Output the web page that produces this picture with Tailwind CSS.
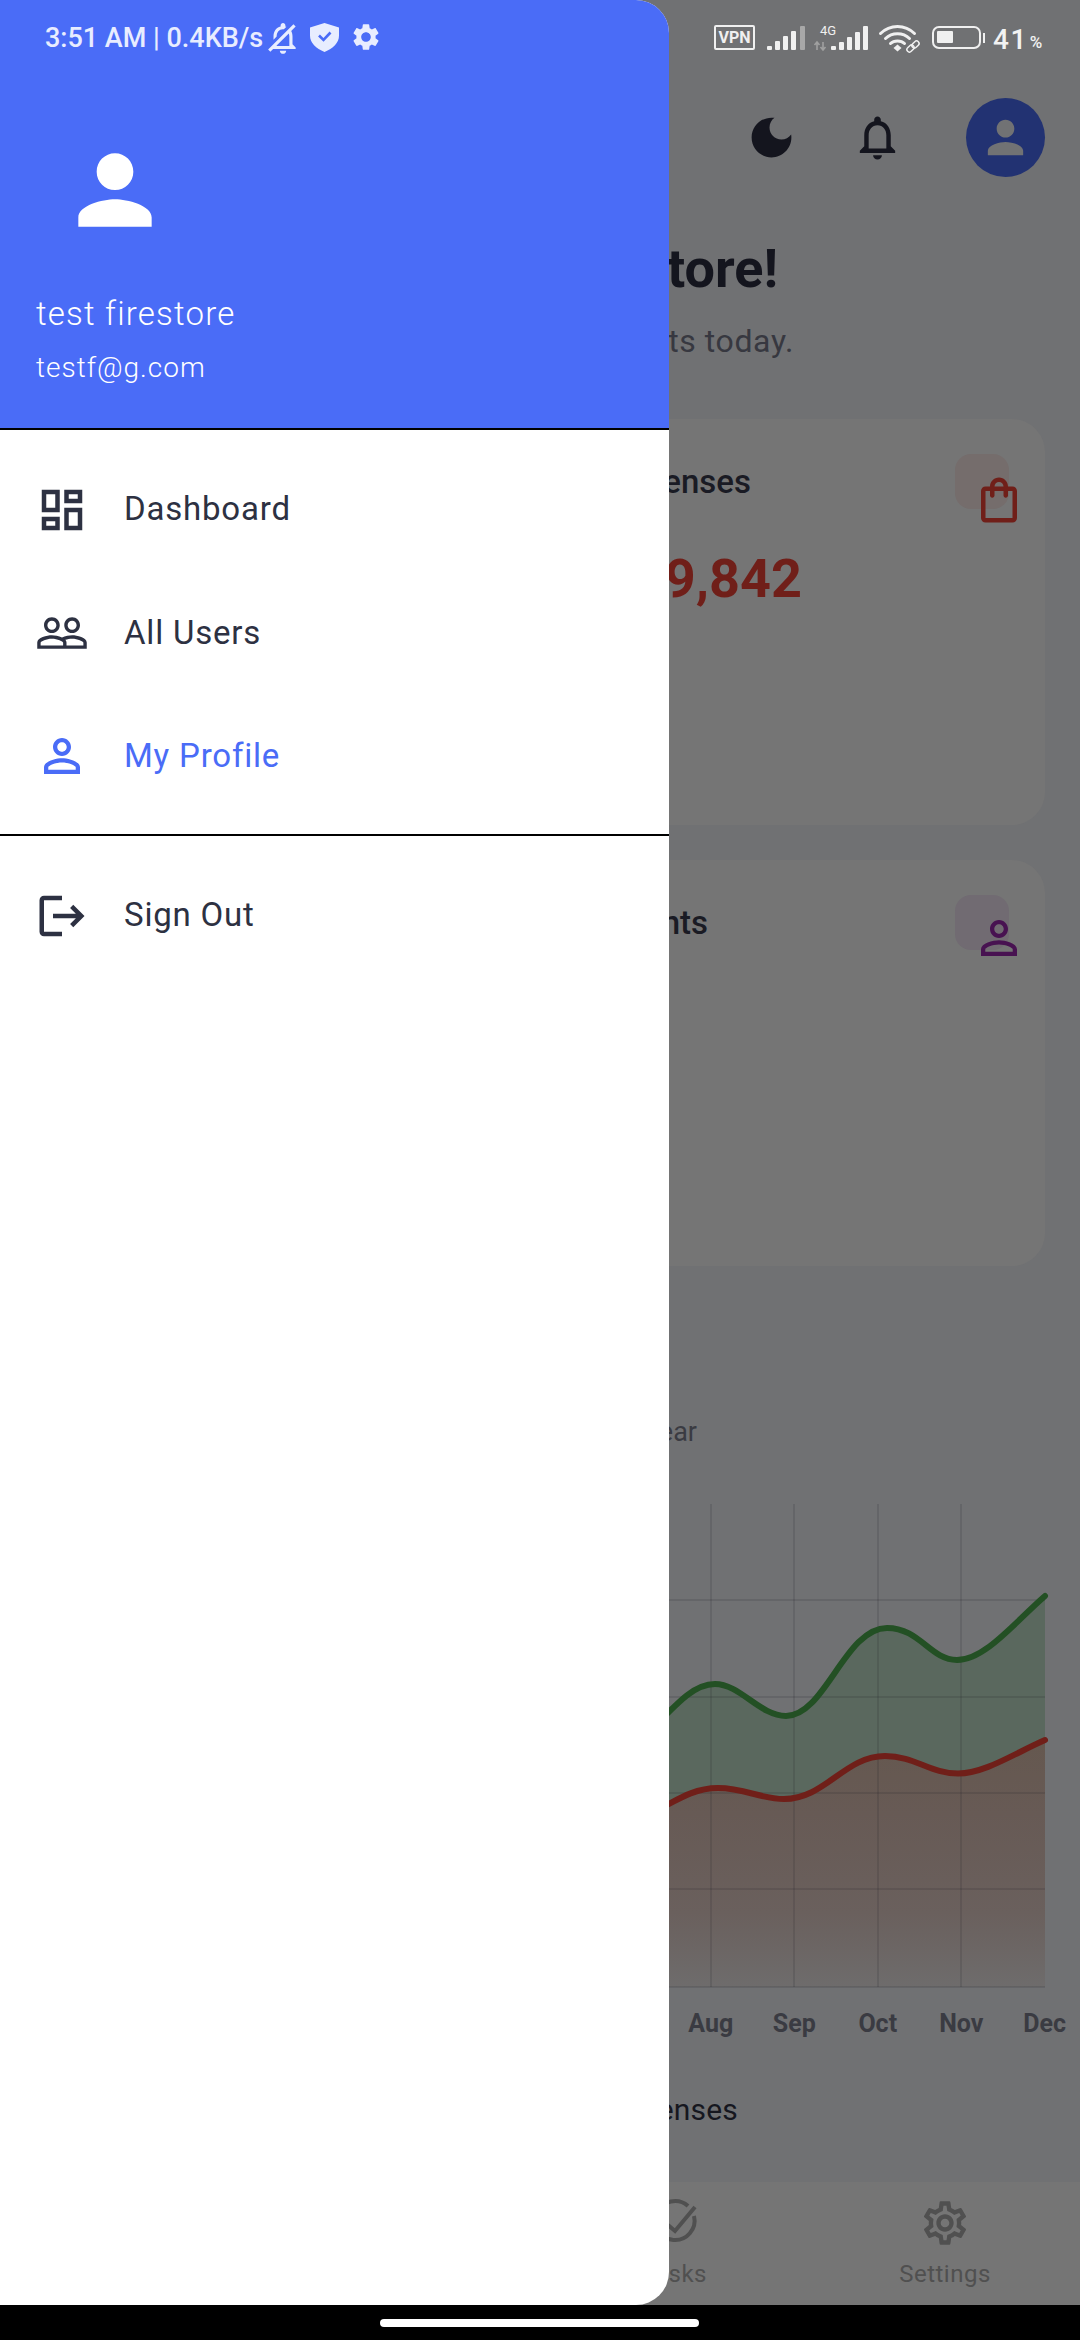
<!DOCTYPE html>
<html>
<head>
<meta charset="utf-8">
<script src="https://cdn.jsdelivr.net/npm/@tailwindcss/browser@4"></script>
</head>
<body class="m-0">
<div class="relative w-[1080px] h-[2340px] bg-black overflow-hidden font-['Roboto',sans-serif]">

  <!-- dimmed app behind the drawer -->
  <main class="h-[2305px] bg-[#707173] flex flex-col pl-[669px] overflow-hidden">
    <!-- status bar, right side -->
    <div class="h-[98px] pt-[25px] pl-[45px] flex items-start text-[#f0f0f0]">
      <div class="w-[41px] h-[25px] border-2 border-[#f0f0f0] rounded-[2px] flex items-center justify-center text-[16px] leading-none font-bold">VPN</div>
      <svg class="ml-[12px] -mt-[5px] w-[156px] h-[33px]" viewBox="767 20 156 33">
        <g fill="#f0f0f0">
          <rect x="767" y="46" width="5" height="4" rx="1"/><rect x="775" y="41" width="5" height="9" rx="1"/><rect x="783" y="36" width="5" height="14" rx="1"/><rect x="791" y="31" width="5" height="19" rx="1"/>
          <rect x="831" y="46" width="5" height="4" rx="1"/><rect x="839" y="42" width="5" height="8" rx="1"/><rect x="847" y="37" width="5" height="13" rx="1"/><rect x="855" y="32" width="5" height="18" rx="1"/><rect x="863" y="26" width="5" height="24" rx="1"/>
        </g>
        <rect x="800" y="26" width="5" height="24" rx="1" fill="#a8a8a8"/>
        <text x="820" y="35" font-size="13" fill="#f0f0f0">4G</text>
        <path d="M817 50v-8m-2.500 3l2.500-3 2.500 3M823 42v8m-2.500-3l2.500 3 2.500-3" stroke="#a0a0a0" stroke-width="1.600" fill="none"/>
        <g fill="none" stroke="#f0f0f0" stroke-linecap="round">
          <path d="M880.500 33.500c9.500-9.500 24.500-9.500 34 0" stroke-width="3"/>
          <path d="M885.500 38.500c6.500-6.500 17.500-6.500 24 0" stroke-width="3"/>
          <path d="M890.500 43.500c3.500-3.500 10.500-3.500 14 0" stroke-width="3"/>
        </g>
        <path d="M893.500 48l4-3.500 4 3.500-4 3.500z" fill="#f0f0f0"/>
        <g fill="none" stroke="#f0f0f0" stroke-width="1.500">
          <rect x="906.500" y="46" width="8" height="5" rx="2.500" transform="rotate(-45 910.500 48.500)"/>
          <rect x="911.500" y="42" width="8" height="5" rx="2.500" transform="rotate(-45 915.500 44.500)"/>
        </g>
      </svg>
      <div class="ml-[9px] mt-[1px] w-[49px] h-[23px] border-[2.5px] border-[#f0f0f0] rounded-[7px] p-[3px]">
        <div class="w-[16px] h-[12px] bg-[#f0f0f0] rounded-[1px]"></div>
      </div>
      <div class="ml-[2px] mt-[8px] w-[2px] h-[10px] bg-[#f0f0f0]"></div>
      <div class="ml-[8px] -mt-[1px] text-[28px] leading-[32px] font-medium text-[#f2f2f2] tracking-[1.500px]">41</div>
      <div class="ml-[2px] mt-[8px] text-[17px] leading-[18px] font-medium text-[#f2f2f2]">%</div>
    </div>

    <!-- app bar -->
    <div class="h-[79px] pl-[76px] flex items-center">
      <svg class="w-[53px] h-[53px] shrink-0" viewBox="0 0 24 24" fill="#14151e"><path d="M12 3c-4.970 0-9 4.030-9 9s4.030 9 9 9 9-4.030 9-9c0-.46-.04-.92-.1-1.360-.98 1.370-2.580 2.260-4.400 2.260-2.980 0-5.400-2.420-5.400-5.400 0-1.810.89-3.420 2.260-4.400-.44-.06-.9-.1-1.360-.1z"/></svg>
      <svg class="ml-[53px] w-[53px] h-[53px] shrink-0" viewBox="0 0 24 24" fill="#14151e"><path d="M12 22c1.100 0 2-.9 2-2h-4c0 1.100.9 2 2 2zm6-6v-5c0-3.070-1.630-5.640-4.500-6.320V4c0-.83-.67-1.500-1.500-1.500s-1.500.67-1.500 1.500v.68C7.640 5.360 6 7.920 6 11v5l-2 2v1h16v-1l-2-2zm-2 1H8v-6c0-2.480 1.510-4.500 4-4.500s4 2.020 4 4.500v6z"/></svg>
      <div class="ml-[62px] w-[79px] h-[79px] rounded-full bg-[#223272] flex items-center justify-center shrink-0">
        <svg class="w-[53px] h-[53px]" viewBox="0 0 24 24" fill="#717274"><path d="M12 12c2.210 0 4-1.790 4-4s-1.790-4-4-4-4 1.790-4 4 1.790 4 4 4zm0 2c-2.670 0-8 1.340-8 4v2h16v-2c0-2.660-5.330-4-8-4z"/></svg>
      </div>
    </div>

    <!-- greeting -->
    <div class="mt-[60px] w-[109px] h-[64px] flex justify-end whitespace-nowrap text-[54px] leading-[64px] font-bold text-[#14151e]">tore!</div>
    <div class="mt-[20px] w-[125px] h-[40px] flex justify-end whitespace-nowrap text-[32px] leading-[40px] tracking-[0.6px] text-[#373840]">ts today.</div>

    <!-- expenses card -->
    <section class="relative mt-[58px] w-[376px] h-[406px] bg-[#757575] rounded-r-[33px] pt-[43px] shrink-0">
      <div class="w-[82px] h-[40px] flex justify-end whitespace-nowrap text-[33px] leading-[40px] font-medium text-[#1a1b24]">enses</div>
      <div class="mt-[45px] w-[133px] h-[64px] flex justify-end whitespace-nowrap text-[54px] leading-[64px] font-bold text-[#701f19]">9,842</div>
      <div class="absolute left-[286px] top-[35px] w-[54px] h-[55px] rounded-[16px] bg-[#756d6c]"></div>
      <svg class="absolute left-[303px] top-[54px] w-[54px] h-[54px]" viewBox="0 0 24 24" fill="#701f19"><path d="M18 6h-2c0-2.210-1.790-4-4-4S8 3.790 8 6H6c-1.100 0-2 .9-2 2v12c0 1.100.9 2 2 2h12c1.100 0 2-.9 2-2V8c0-1.100-.9-2-2-2zm-6-2c1.100 0 2 .9 2 2h-4c0-1.100.9-2 2-2zm6 16H6V8h2v2c0 .55.45 1 1 1s1-.45 1-1V8h4v2c0 .55.45 1 1 1s1-.45 1-1V8h2v12z"/></svg>
    </section>

    <!-- clients card -->
    <section class="relative mt-[35px] w-[376px] h-[406px] bg-[#757575] rounded-r-[33px] pt-[43px] shrink-0">
      <div class="w-[39px] h-[40px] flex justify-end whitespace-nowrap text-[33px] leading-[40px] font-medium text-[#1a1b24]">nts</div>
      <div class="absolute left-[286px] top-[35px] w-[54px] h-[55px] rounded-[16px] bg-[#716b72]"></div>
      <svg class="absolute left-[303px] top-[51px] w-[54px] h-[54px]" viewBox="0 0 24 24" fill="#481251"><path d="M12 5.900c1.160 0 2.100.94 2.100 2.100s-.94 2.100-2.100 2.100S9.900 9.160 9.900 8s.94-2.100 2.100-2.100m0 9c2.970 0 6.100 1.460 6.100 2.100v1.100H5.900V17c0-.64 3.130-2.100 6.100-2.100M12 4C9.790 4 8 5.790 8 8s1.790 4 4 4 4-1.790 4-4-1.790-4-4-4zm0 9c-2.670 0-8 1.340-8 4v3h16v-3c0-2.660-5.330-4-8-4z"/></svg>
    </section>

    <div class="mt-[148px] w-[28px] h-[36px] flex justify-end whitespace-nowrap text-[27px] leading-[36px] text-[#3a3b42]">ear</div>

    <!-- chart -->
    <svg class="mt-[54px] w-[411px] h-[486px] shrink-0" viewBox="669 1504 411 486">
      <defs>
        <linearGradient id="r" x1="0" y1="1740" x2="0" y2="1987" gradientUnits="userSpaceOnUse"><stop offset="0" stop-color="#65584f"/><stop offset=".3" stop-color="#675a55"/><stop offset=".7" stop-color="#6a605d"/><stop offset="1" stop-color="#6e6c6c"/></linearGradient>
      </defs>
      <path d="M650 1731C680 1700 695 1684 715 1684C740 1684 760 1716 786 1716C825 1716 845 1628 887 1628C920 1628 930 1660 957 1660C985 1660 1015 1622 1045 1596V1830H650Z" fill="#235024" fill-opacity=".27"/>
      <path d="M650 1814C680 1798 695 1788 718 1788C745 1788 760 1799 784 1799C825 1799 845 1756 885 1756C915 1756 930 1773.500 958 1773.500C985 1773.500 1015 1753 1045 1740V1987H650Z" fill="url(#r)"/>
      <g stroke="#17171c" stroke-opacity=".13" stroke-width="2" fill="none">
        <path d="M711 1504V1987M794 1504V1987M878 1504V1987M961 1504V1987"/>
        <path d="M669 1600H1045M669 1697H1045M669 1793H1045M669 1889H1045M669 1987H1045"/>
      </g>
      <path d="M650 1731C680 1700 695 1684 715 1684C740 1684 760 1716 786 1716C825 1716 845 1628 887 1628C920 1628 930 1660 957 1660C985 1660 1015 1622 1045 1596" fill="none" stroke="#235024" stroke-width="6" stroke-linecap="round"/>
      <path d="M650 1814C680 1798 695 1788 718 1788C745 1788 760 1799 784 1799C825 1799 845 1756 885 1756C915 1756 930 1773.500 958 1773.500C985 1773.500 1015 1753 1045 1740" fill="none" stroke="#701f19" stroke-width="6" stroke-linecap="round"/>
    </svg>
    <div class="mt-[18px] h-[32px] flex text-[25px] leading-[32px] font-bold text-[#3a3b42] shrink-0">
      <div class="w-[83.500px] shrink-0 text-center">Aug</div>
      <div class="w-[83.500px] shrink-0 text-center">Sep</div>
      <div class="w-[83.500px] shrink-0 text-center">Oct</div>
      <div class="w-[83.500px] shrink-0 text-center">Nov</div>
      <div class="w-[83.500px] shrink-0 text-center">Dec</div>
    </div>
    <div class="mt-[50px] w-[69px] h-[40px] flex justify-end whitespace-nowrap text-[30px] leading-[40px] tracking-[0.2px] text-[#16171f] shrink-0">enses</div>

    <!-- bottom navigation -->
    <nav class="mt-auto -ml-[669px] pl-[669px] h-[123px] bg-[#757575] flex text-[24px] leading-[32px] tracking-[0.5px] text-[#505050] shrink-0">
      <div class="w-[38px] flex flex-col items-end pt-[15px]">
        <svg class="mr-[6px] w-[52px] h-[52px] shrink-0" viewBox="649 2197 52 52" fill="none" stroke="#505050" stroke-width="4">
          <path d="M688 2206A19.500 19.500 0 1 0 694 2216"/>
          <path d="M668 2225l7 6 20-24"/>
        </svg>
        <div class="mt-[9px]">sks</div>
      </div>
      <div class="ml-[188px] w-[100px] flex flex-col items-center pt-[15px]">
        <svg class="w-[52px] h-[52px] shrink-0" viewBox="0 0 24 24" fill="#505050"><path d="M19.430 12.980c.04-.32.07-.64.07-.98 0-.34-.03-.66-.07-.98l2.110-1.650c.19-.15.24-.42.12-.64l-2-3.460c-.09-.16-.26-.25-.44-.25-.06 0-.12.01-.17.03l-2.490 1c-.52-.4-1.080-.73-1.690-.98l-.38-2.650C14.460 2.180 14.250 2 14 2h-4c-.25 0-.46.18-.49.42l-.38 2.650c-.61.25-1.170.59-1.690.98l-2.490-1c-.06-.02-.12-.03-.18-.03-.17 0-.34.09-.43.25l-2 3.460c-.13.22-.07.49.12.64l2.110 1.650c-.04.32-.07.65-.07.98 0 .33.03.66.07.98l-2.110 1.650c-.19.15-.24.42-.12.64l2 3.460c.09.16.26.25.44.25.06 0 .12-.01.17-.03l2.490-1c.52.4 1.080.73 1.690.98l.38 2.650c.03.24.24.42.49.42h4c.25 0 .46-.18.49-.42l.38-2.650c.61-.25 1.170-.59 1.690-.98l2.490 1c.06.02.12.03.18.03.17 0 .34-.09.43-.25l2-3.460c.12-.22.07-.49-.12-.64l-2.110-1.650zm-1.980-1.710c.04.31.05.52.05.73 0 .21-.02.43-.05.73l-.14 1.130.89.7 1.080.84-.7 1.210-1.270-.51-1.040-.42-.9.68c-.43.32-.84.56-1.250.73l-1.060.43-.16 1.130-.2 1.350h-1.400l-.19-1.350-.16-1.130-1.060-.43c-.43-.18-.83-.41-1.230-.71l-.91-.7-1.060.43-1.270.51-.7-1.210 1.080-.84.89-.7-.14-1.130c-.03-.31-.05-.54-.05-.74s.02-.43.05-.73l.14-1.130-.89-.7-1.080-.84.7-1.210 1.270.51 1.040.42.9-.68c.43-.32.84-.56 1.250-.73l1.060-.43.16-1.130.2-1.350h1.390l.19 1.350.16 1.130 1.060.43c.43.18.83.41 1.230.71l.91.7 1.060-.43 1.270-.51.7 1.210-1.070.85-.89.7.14 1.130zM12 8c-2.210 0-4 1.790-4 4s1.790 4 4 4 4-1.790 4-4-1.790-4-4-4zm0 6c-1.100 0-2-.9-2-2s.9-2 2-2 2 .9 2 2-.9 2-2 2z"/></svg>
        <div class="mt-[9px]">Settings</div>
      </div>
    </nav>
  </main>

  <!-- gesture bar -->
  <div class="absolute left-[380px] top-[2319px] w-[319px] h-[8px] rounded-full bg-white"></div>

  <!-- drawer -->
  <aside class="absolute left-0 top-0 w-[669px] h-[2305px] bg-white rounded-r-[33px] overflow-hidden flex flex-col">
    <header class="h-[430px] shrink-0 bg-[#4a6cf7] border-b-2 border-black text-white">
      <div class="h-[56px] pt-[20px] pl-[45px] flex items-start text-[#e8edff]">
        <span class="text-[27px] leading-[36px] font-medium whitespace-nowrap">3:51 AM | 0.4KB/s</span>
        <svg class="ml-[1px] -mt-[1px] w-[38px] h-[38px]" viewBox="0 0 24 24" fill="#e8edff"><g transform="matrix(-1 0 0 1 24 0)"><path d="M12 22c1.100 0 2-.9 2-2h-4c0 1.100.9 2 2 2zm0-15.500c2.490 0 4 2.020 4 4.500v.1l2 2V11c0-3.070-1.640-5.640-4.500-6.320V4c0-.83-.67-1.500-1.500-1.500s-1.500.67-1.500 1.500v.68c-.24.06-.47.15-.69.23l1.640 1.640c.18-.02.36-.05.55-.05zM5.410 3.350L4 4.760l2.810 2.810C6.290 8.570 6 9.740 6 11v5l-2 2v1h14.240l1.740 1.740 1.410-1.410L5.410 3.350zM16 17H8v-6c0-.68.12-1.320.34-1.900L16 16.760V17z"/></g></svg>
        <svg class="ml-[8px] mt-[3px] w-[29px] h-[29px]" viewBox="0 0 29 29"><path d="M14.500 0L29 4.500v8C29 20 23 25.500 14.500 29 6 25.500 0 20 0 12.500v-8z" fill="#e8edff"/><path d="M9 12.500l4.500 4.500 7-7.500" fill="none" stroke="#4a6cf7" stroke-width="2.600"/></svg>
        <svg class="ml-[11px] mt-[1px] w-[32px] h-[32px]" viewBox="0 0 24 24" fill="#e8edff"><path d="M19.140 12.940c.04-.3.06-.61.06-.94 0-.32-.02-.64-.07-.94l2.030-1.580c.18-.14.23-.41.12-.61l-1.920-3.320c-.12-.22-.37-.29-.59-.22l-2.390.96c-.5-.38-1.030-.7-1.620-.94l-.36-2.540c-.04-.24-.24-.41-.48-.41h-3.840c-.24 0-.43.17-.47.41l-.36 2.540c-.59.24-1.130.57-1.620.94l-2.390-.96c-.22-.08-.47 0-.59.22L2.740 8.870c-.12.21-.08.47.12.61l2.030 1.580c-.05.3-.09.63-.09.94s.02.64.07.94l-2.030 1.580c-.18.14-.23.41-.12.61l1.920 3.320c.12.22.37.29.59.22l2.390-.96c.5.38 1.030.7 1.620.94l.36 2.540c.05.24.24.41.48.41h3.840c.24 0 .44-.17.47-.41l.36-2.540c.59-.24 1.130-.56 1.620-.94l2.390.96c.22.08.47 0 .59-.22l1.920-3.320c.12-.22.07-.47-.12-.61l-2.010-1.580zM12 15.600c-1.980 0-3.600-1.620-3.600-3.600s1.620-3.600 3.600-3.600 3.600 1.620 3.600 3.600-1.620 3.600-3.600 3.600z"/></svg>
      </div>
      <svg class="ml-[60px] mt-[79px] w-[110px] h-[110px]" viewBox="0 0 24 24" fill="#ffffff"><path d="M12 12c2.210 0 4-1.790 4-4s-1.790-4-4-4-4 1.790-4 4 1.790 4 4 4zm0 2c-2.670 0-8 1.340-8 4v2h16v-2c0-2.660-5.330-4-8-4z"/></svg>
      <div class="ml-[36px] mt-[49px] text-[33px] leading-[40px] font-light tracking-[1.200px]">test firestore</div>
      <div class="ml-[36px] mt-[16px] text-[28px] leading-[36px] font-light tracking-[1px]">testf@g.com</div>
    </header>

    <nav class="pt-[18px] text-[33px] leading-[40px] tracking-[0.800px] text-[#2d3142]">
      <a class="h-[123px] flex items-center pl-[35px]">
        <svg class="w-[54px] h-[54px] shrink-0" viewBox="0 0 24 24" fill="#2d3142"><path d="M19 5v2h-4V5h4M9 5v6H5V5h4m10 8v6h-4v-6h4M9 17v2H5v-2h4M21 3h-8v6h8V3zM11 3H3v10h8V3zm10 8h-8v10h8V11zm-10 4H3v6h8v-6z"/></svg>
        <span class="ml-[35px] -mt-[2px]">Dashboard</span>
      </a>
      <a class="h-[123px] flex items-center pl-[35px]">
        <svg class="w-[54px] h-[54px] shrink-0" viewBox="0 0 24 24" fill="#2d3142"><path d="M16.500 13c-1.200 0-3.070.34-4.500 1-1.430-.67-3.300-1-4.500-1C5.330 13 1 14.080 1 16.250V19h22v-2.750c0-2.170-4.330-3.250-6.500-3.250zm-4 4.500h-10v-1.250c0-.54 2.560-1.750 5-1.750s5 1.210 5 1.750v1.250zm9 0H14v-1.250c0-.46-.2-.86-.52-1.220.88-.3 1.960-.53 3.020-.53 2.440 0 5 1.210 5 1.750v1.250zM7.500 12c1.930 0 3.500-1.570 3.500-3.500S9.430 5 7.500 5 4 6.570 4 8.500 5.570 12 7.500 12zm0-5.500c1.100 0 2 .9 2 2s-.9 2-2 2-2-.9-2-2 .9-2 2-2zm9 5.500c1.930 0 3.500-1.570 3.500-3.500S18.430 5 16.500 5 13 6.570 13 8.500s1.570 3.500 3.500 3.500zm0-5.500c1.100 0 2 .9 2 2s-.9 2-2 2-2-.9-2-2 .9-2 2-2z"/></svg>
        <span class="ml-[35px]">All Users</span>
      </a>
      <a class="h-[123px] flex items-center pl-[35px] text-[#4a6cf7]">
        <svg class="w-[54px] h-[54px] shrink-0" viewBox="0 0 24 24" fill="#4a6cf7"><path d="M12 5.900c1.160 0 2.100.94 2.100 2.100s-.94 2.100-2.100 2.100S9.900 9.160 9.900 8s.94-2.100 2.100-2.100m0 9c2.970 0 6.100 1.460 6.100 2.100v1.100H5.900V17c0-.64 3.130-2.100 6.100-2.100M12 4C9.790 4 8 5.790 8 8s1.790 4 4 4 4-1.790 4-4-1.790-4-4-4zm0 9c-2.670 0-8 1.340-8 4v3h16v-3c0-2.660-5.330-4-8-4z"/></svg>
        <span class="ml-[35px]">My Profile</span>
      </a>
      <div class="mt-[17px] h-[2px] bg-black"></div>
      <a class="mt-[18px] h-[123px] flex items-center pl-[35px]">
        <svg class="w-[54px] h-[54px] shrink-0" viewBox="0 0 24 24" fill="#2d3142"><path d="M17 7l-1.410 1.410L18.170 11H8v2h10.170l-2.580 2.580L17 17l5-5zM4 5h8V3H4c-1.100 0-2 .9-2 2v14c0 1.100.9 2 2 2h8v-2H4V5z"/></svg>
        <span class="ml-[35px] -mt-[2px]">Sign Out</span>
      </a>
    </nav>
  </aside>
</div>
</body>
</html>
